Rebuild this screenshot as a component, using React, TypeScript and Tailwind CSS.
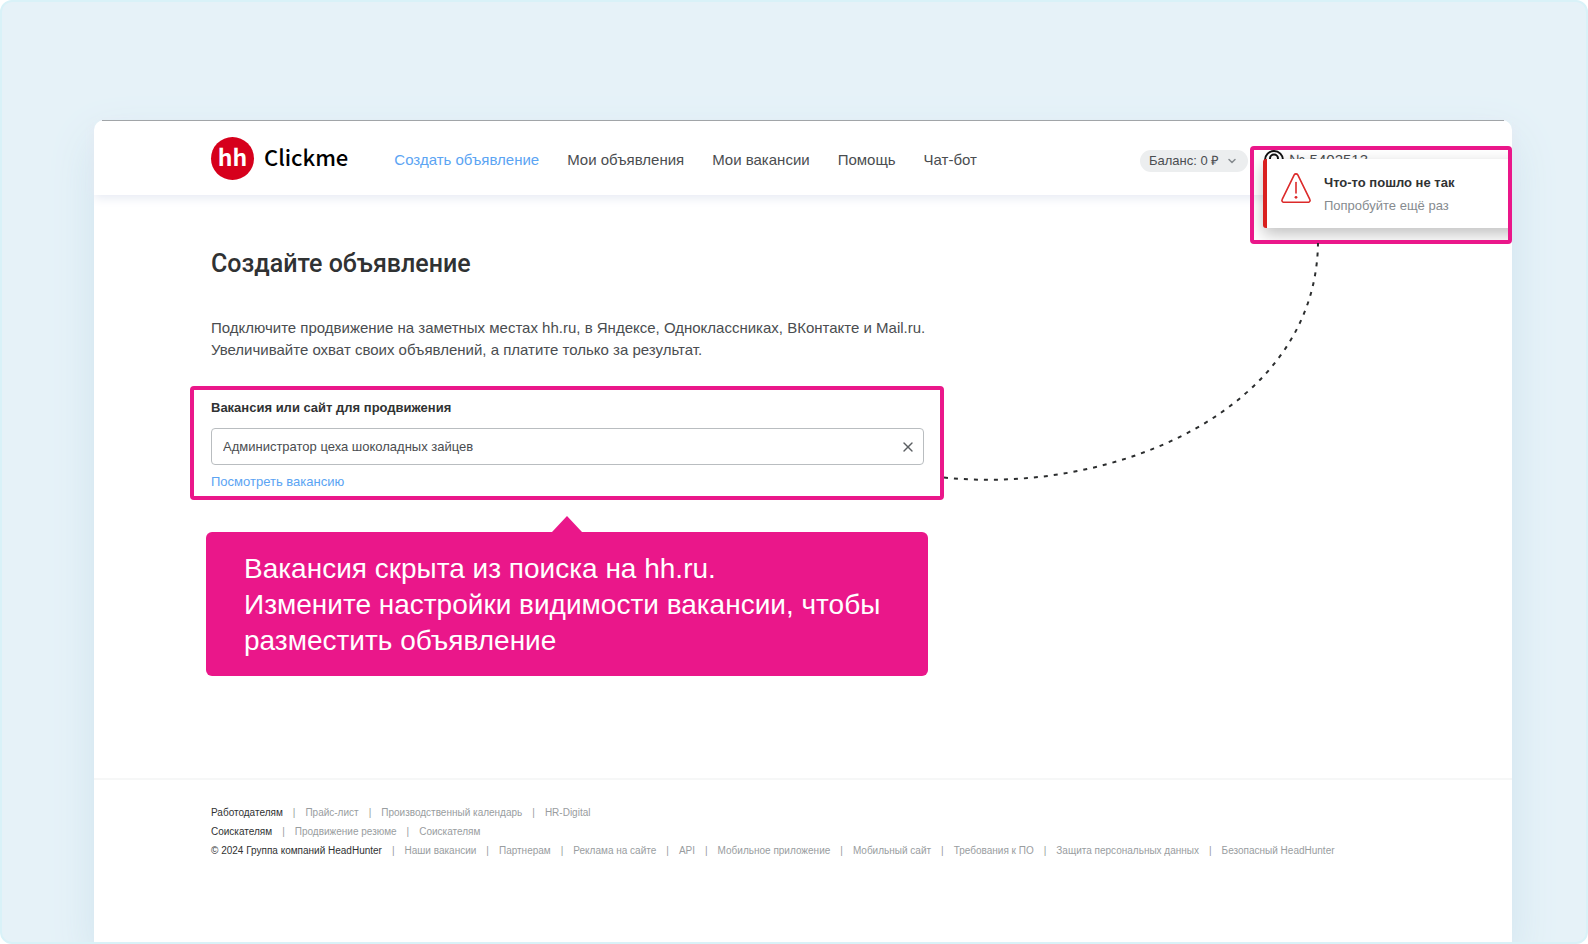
import { ChevronDown, X } from 'lucide-react'

const nav = ['Создать объявление', 'Мои объявления', 'Мои вакансии', 'Помощь', 'Чат-бот']

const footer = [
  { title: 'Работодателям', links: ['Прайс-лист', 'Производственный календарь', 'HR-Digital'] },
  { title: 'Соискателям', links: ['Продвижение резюме', 'Соискателям'] },
  {
    title: '© 2024 Группа компаний HeadHunter',
    links: [
      'Наши вакансии',
      'Партнерам',
      'Реклама на сайте',
      'API',
      'Мобильное приложение',
      'Мобильный сайт',
      'Требования к ПО',
      'Защита персональных данных',
      'Безопасный HeadHunter',
    ],
  },
]

function Logo() {
  return (
    <a href="#" className="flex items-center gap-[10px] font-['Noto_Sans_CJK_SC',sans-serif]">
      <span className="flex size-[43px] items-center justify-center rounded-full bg-[#d6001c] pb-1 text-[23px] leading-[36px] font-bold text-white">
        hh
      </span>
      <span className="pb-1 text-[22px] leading-[36px] font-medium text-black">Clickme</span>
    </a>
  )
}

function Toast() {
  return (
    <div className="absolute top-[25px] right-0 h-[98px] w-[262px] overflow-hidden rounded border-4 border-[#ea178a] pt-[9px] pl-[9px]">
      <div
        role="alert"
        className="flex h-[69px] w-[300px] rounded-l-[3px] border-l-4 border-[#d9201f] bg-white pt-[14px] pl-[14px] shadow-[0_6px_16px_rgba(0,0,0,0.25)]"
      >
        <svg viewBox="0 0 30 30" className="size-[30px]" fill="none" stroke="#dc2a2a" strokeWidth="1.6">
          <path d="M13.2 1.9a2.1 2.1 0 0 1 3.6 0L28.8 26.3a2 2 0 0 1-1.8 3H3a2 2 0 0 1-1.8-3Z" strokeLinejoin="round" />
          <path d="M15 9.5v10.5" strokeLinecap="round" />
          <circle cx="15" cy="24.3" r="1.4" fill="#dc2a2a" stroke="none" />
        </svg>
        <div className="mt-px ml-[13px] text-[13px] whitespace-nowrap">
          <p className="leading-[18px] font-bold text-[#303233]">Что-то пошло не так</p>
          <p className="mt-[5px] leading-[18px] text-[#868b8f]">Попробуйте ещё раз</p>
        </div>
      </div>
    </div>
  )
}

function Header() {
  return (
    <header className="relative flex h-[74px] items-center pr-[144px] pl-[117px] whitespace-nowrap shadow-[0_3px_10px_#e6eaf3]">
      <Logo />
      <nav className="mt-1 ml-[46px] flex gap-[28px] text-[15px] text-[#4a4d50]">
        {nav.map((item, i) => (
          <a key={item} href="#" className={i === 0 ? 'text-[#5ba4f3]' : ''}>
            {item}
          </a>
        ))}
      </nav>
      <button className="mt-[5px] ml-auto flex h-[22px] items-center gap-[7px] rounded-full bg-[#eceeef] pr-[10px] pl-[9px] text-[13px] text-[#4a4d50]">
        Баланс: 0 ₽
        <ChevronDown size={12} strokeWidth={3} className="text-[#868b8f]" />
      </button>
      <a href="#" className="mt-1 ml-4 flex items-center gap-[5px] text-[15px] text-[#4a4d50]">
        <svg viewBox="0 0 20 20" className="size-5" fill="none" stroke="#111" strokeWidth="2">
          <circle cx="10" cy="10" r="9" />
          <circle cx="10" cy="8.5" r="4" />
          <path d="M4 16.5c1.500-2 3.500-3 6-3s4.500 1 6 3" />
        </svg>
        № 5402513
      </a>
      <Toast />
    </header>
  )
}

function Callout() {
  return (
    <div className="relative mt-8 -ml-[5px] w-[722px] rounded-md bg-[#ea178a] px-[38px] pt-[19px] pb-[17px] text-[28px] leading-[36px] text-white">
      <svg viewBox="0 0 30 16" className="absolute -top-[16px] left-1/2 h-4 w-[30px] -translate-x-1/2" fill="#ea178a">
        <path d="M0 16 15 0l15 16Z" />
      </svg>
      Вакансия скрыта из поиска на hh.ru.
      <br />
      Измените настройки видимости вакансии, чтобы
      <br />
      разместить объявление
    </div>
  )
}

export default function App() {
  return (
    <div className="min-h-screen bg-white font-['Liberation_Sans',Arial,sans-serif]">
      <div className="flex min-h-screen flex-col overflow-hidden rounded-xl border-2 border-[#d9f2f8] bg-[#e6f2f8] px-[92px] pt-[118px] sm:pr-[74px]">
        <div className="relative flex flex-1 flex-col rounded-t-[10px] bg-white shadow-[0_20px_46px_#cfe3ee]">
          <div className="mx-2 h-px bg-[#8a8d8f]" />
          <Header />

          <main className="flex-1 pr-4 pb-24 pl-[117px]">
            <h1 className="pt-[51px] font-[Roboto,sans-serif] text-[25px] leading-[36px] font-medium text-[#303233]">
              Создайте объявление
            </h1>
            <p className="mt-[35px] text-[15px] leading-[22px] text-[#4a4d50]">
              Подключите продвижение на заметных местах hh.ru, в Яндексе, Одноклассниках, ВКонтакте и Mail.ru.
              <br />
              Увеличивайте охват своих объявлений, а платите только за результат.
            </p>

            <div className="mt-[25px] -ml-[21px] w-[754px] rounded border-4 border-[#ea178a] px-[17px] pt-[9px] pb-[5px] text-[13px] leading-[18px]">
              <label htmlFor="vacancy" className="block font-bold text-[#303233]">
                Вакансия или сайт для продвижения
              </label>
              <div className="mt-[11px] flex h-[37px] w-[713px] items-center rounded border border-[#b9bdc0] pr-[7px] pl-[11px]">
                <input
                  id="vacancy"
                  className="min-w-0 flex-1 text-[#4a4d50] outline-none"
                  defaultValue="Администратор цеха шоколадных зайцев"
                />
                <button aria-label="Очистить" className="text-[#5b5f62]">
                  <X size={16} strokeWidth={2} />
                </button>
              </div>
              <a href="#" className="mt-2 block text-[#5ba4f3]">
                Посмотреть вакансию
              </a>
            </div>

            <Callout />
          </main>

          <footer className="border-t-2 border-[#f6f7f7] pt-[23px] pb-[82px] pl-[117px] text-[10px] leading-[19px] whitespace-nowrap text-[#999da0]">
            {footer.map((row) => (
              <ul key={row.title} className="flex">
                <li className="text-[#303233]">{row.title}</li>
                {row.links.map((link) => (
                  <li key={link}>
                    <span className="mx-[10px]">|</span>
                    <a href="#">{link}</a>
                  </li>
                ))}
              </ul>
            ))}
          </footer>

          {/* connector between the field and the error toast */}
          <svg
            viewBox="0 0 380 240"
            className="pointer-events-none absolute top-[123px] left-[850px] h-[240px] w-[380px]"
            fill="none"
            stroke="#2b2d2e"
            strokeWidth="2"
            strokeDasharray="4 6"
          >
            <path d="M0 234.500C170 252 372 167 374 0" />
          </svg>
        </div>
      </div>
    </div>
  )
}
